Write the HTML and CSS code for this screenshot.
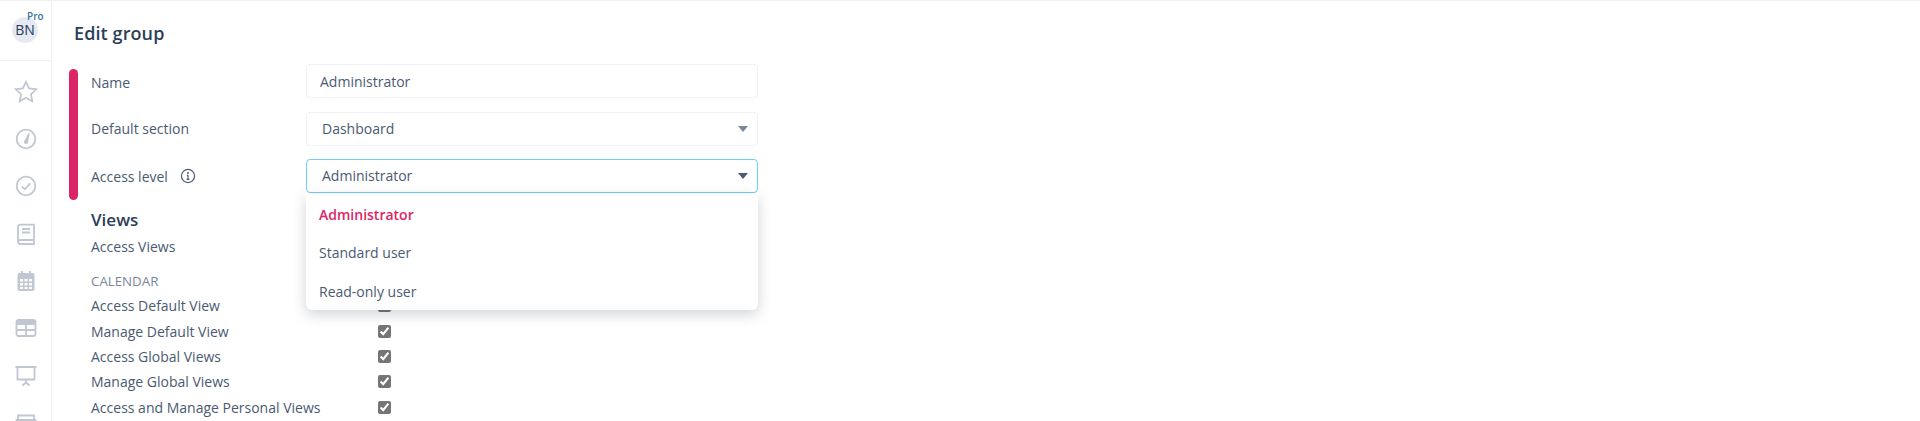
FILE: index.html
```html
<!DOCTYPE html>
<html lang="en">
<head>
  <meta charset="UTF-8">
  <title>Edit group</title>
  <link rel="stylesheet" href="styles.css">
</head>
<body>
  <div class="app">

    <!-- Sidebar -->
    <aside class="sidebar">
      <div class="account">
        <span class="pro">Pro</span>
        <span class="avatar">BN</span>
      </div>
      <nav class="side-icons">
        <svg viewBox="0 0 24 24"><path d="M12 1.800l3.100 6.600 7.100.9-5.200 4.900 1.300 7.100-6.300-3.500-6.300 3.500 1.300-7.100-5.200-4.900 7.100-.9z"/></svg>
        <svg viewBox="0 0 24 24"><circle cx="12" cy="12" r="9.300"/><path class="solid" d="M14.400 6l1.300.4-1.500 7.600a2.200 2.200 0 1 1-3.100-1.200z"/></svg>
        <svg viewBox="0 0 24 24"><circle cx="12" cy="12" r="9.300"/><path d="M7.800 12.300l3 3 5.500-6"/></svg>
        <svg viewBox="0 0 24 24"><path d="M20 18H6.200a2 2 0 0 0 0 4H20V2.700H6a2 2 0 0 0-2 2V20M8 7h8M8 10.500h8"/></svg>
        <svg viewBox="0 0 24 24"><path class="solid" d="M7 2h2v2h6V2h2v2h1.500A2 2 0 0 1 20.500 6v14a2 2 0 0 1-2 2h-13a2 2 0 0 1-2-2V6a2 2 0 0 1 2-2H7zM6 10v2.500h3V10zm4.500 0v2.500h3V10zm4.500 0v2.500h3V10zM6 14v2.500h3V14zm4.500 0v2.500h3V14zm4.500 0v2.500h3V14zM6 18v2h3v-2zm4.500 0v2h3v-2zm4.500 0v2h3v-2z" fill-rule="evenodd"/></svg>
        <svg viewBox="0 0 24 24"><rect x="2.500" y="4" width="19" height="16" rx="2"/><path class="solid" d="M3 4.500h18V9H3z"/><path d="M12 9v11M2.500 14h19"/></svg>
        <svg viewBox="0 0 24 24"><path d="M1.500 3h21M3.500 3v12.500h17V3M12 15.500v3M8.500 21.500l3.500-3 3.500 3"/></svg>
        <svg viewBox="0 0 24 24"><path d="M4 9V4.500h16V9M2.500 9h19v5h-19zM4 14v7M20 14v7"/></svg>
      </nav>
    </aside>

    <!-- Form -->
    <main class="content">
      <h1>Edit group</h1>

      <div class="fields">
        <div class="accent-bar"></div>
        <div class="field-rows">
          <div class="field">
            <label class="name-label">Name</label>
            <div class="control input-text">Administrator</div>
          </div>
          <div class="field">
            <label>Default section</label>
            <div class="control select">Dashboard<span class="caret"></span></div>
          </div>
          <div class="field">
            <label>Access level
              <svg class="info" viewBox="0 0 16 16"><circle cx="8" cy="8" r="6.600"/><path d="M8 7.300v4M6.600 11.300h2.800M6.800 7.300H8"/><circle class="dot" cx="8" cy="4.900" r="1"/></svg>
            </label>
            <div class="select-wrap">
              <div class="control select focused">Administrator<span class="caret dark"></span></div>
              <ul class="menu">
                <li class="selected">Administrator</li>
                <li>Standard user</li>
                <li>Read-only user</li>
              </ul>
            </div>
          </div>
        </div>
      </div>

      <div class="views">
        <h2>Views</h2>
        <div class="access-views">Access Views</div>
        <div class="group-title">CALENDAR</div>
        <div class="perm-list">
          <div class="perm"><span>Access Default View</span><input type="checkbox" checked></div>
          <div class="perm"><span>Manage Default View</span><input type="checkbox" checked></div>
          <div class="perm"><span>Access Global Views</span><input type="checkbox" checked></div>
          <div class="perm"><span>Manage Global Views</span><input type="checkbox" checked></div>
          <div class="perm"><span>Access and Manage Personal Views</span><input type="checkbox" checked></div>
        </div>
      </div>
    </main>

  </div>
</body>
</html>
```

FILE: styles.css
```css
html, body {
  height: 100%;
}

body {
  margin: 0;
  overflow: hidden;
  background: #fff;
  color: #4a5a72;
  font-family: "Open Sans", sans-serif;
  font-size: 14px;
}

.app {
  display: flex;
  height: 100%;
  border-top: 1px solid #eef0f4;
  box-sizing: border-box;
}

/* Sidebar */
.sidebar {
  width: 52px;
  flex-shrink: 0;
  border-right: 1px solid #eef0f4;
  box-sizing: border-box;
}

.account {
  position: relative;
  height: 60px;
  border-bottom: 1px solid #eef0f4;
  display: flex;
  justify-content: center;
  padding-top: 16px;
  padding-right: 1px;
  box-sizing: border-box;
}

.avatar {
  width: 26px;
  height: 26px;
  border-radius: 50%;
  background: #e6e9f1;
  color: #1f3a5a;
  font-size: 14px;
  line-height: 26px;
  text-align: center;
}

.pro {
  position: absolute;
  top: 10px;
  left: 27px;
  color: #36769f;
  font-size: 10px;
  font-weight: 600;
  line-height: 10px;
}

.side-icons {
  display: flex;
  flex-direction: column;
  align-items: center;
  gap: 23.400px;
  padding-top: 18.500px;
}

.side-icons svg {
  width: 24px;
  height: 24px;
  flex-shrink: 0;
  fill: none;
  stroke: #c0c7d2;
  stroke-width: 1.800;
}

.side-icons .solid {
  fill: #c0c7d2;
  stroke: none;
}

/* Form */
.content {
  flex: 1;
  padding: 0 17px;
}

h1 {
  margin: 0;
  padding-left: 5px;
  color: #2a3f5a;
  font-size: 18px;
  font-weight: 600;
  letter-spacing: 0.1px;
  line-height: 24px;
  padding-top: 20px;
}

.fields {
  display: flex;
  margin-top: 19px;
}

.accent-bar {
  width: 9px;
  height: 131px;
  margin-top: 5px;
  border-radius: 5px;
  background: #dc2566;
}

.field-rows {
  display: flex;
  flex-direction: column;
  gap: 13.500px;
  margin-left: 13px;
}

.field {
  display: flex;
  align-items: center;
}

.field label {
  width: 215px;
  display: flex;
  align-items: center;
}

.field .name-label {
  padding-top: 2px;
}

.info {
  width: 16px;
  height: 16px;
  margin-left: 12px;
  fill: none;
  stroke: #4a5a72;
  stroke-width: 1.200;
}

.info .dot {
  fill: #4a5a72;
  stroke: none;
}

.control {
  position: relative;
  width: 452px;
  height: 34px;
  box-sizing: border-box;
  border: 1px solid #f0f1f6;
  border-radius: 4px;
  line-height: 33px;
  padding-left: 13px;
  background: #fff;
}

.select {
  padding-left: 15px;
  line-height: 32px;
}

.focused {
  border-color: #74cdf2;
}

.caret {
  position: absolute;
  right: 9px;
  top: 13px;
  border-left: 5px solid transparent;
  border-right: 5px solid transparent;
  border-top: 6px solid #7a8798;
}

.caret.dark {
  border-top-color: #4a5a72;
}

.select-wrap {
  position: relative;
}

.menu {
  position: absolute;
  top: 35px;
  left: 0;
  width: 452px;
  height: 116px;
  box-sizing: border-box;
  margin: 0;
  padding: 2px 0 0;
  list-style: none;
  background: #fff;
  border-radius: 0 0 6px 6px;
  box-shadow: 0 4px 14px rgba(40, 50, 70, 0.22);
  z-index: 10;
}

.menu li {
  height: 38.300px;
  line-height: 38.300px;
  padding-left: 13px;
}

.menu .selected {
  color: #dc2566;
  font-weight: 600;
}

/* Views */
.views {
  padding-left: 22px;
  margin-top: 8px;
}

h2 {
  margin: 0;
  color: #2a3f5a;
  font-size: 17px;
  font-weight: 600;
  line-height: 24px;
}

.access-views {
  line-height: 20px;
  margin-top: 5px;
}

.group-title {
  color: #7b8799;
  font-size: 13.300px;
  line-height: 20px;
  margin-top: 14px;
}

.perm-list {
  margin-top: 2px;
}

.perm {
  display: flex;
  align-items: center;
  height: 25.400px;
}

.perm span {
  width: 287px;
}

.perm input {
  width: 13px;
  height: 13px;
  margin: 0;
  accent-color: #757575;
}
```
